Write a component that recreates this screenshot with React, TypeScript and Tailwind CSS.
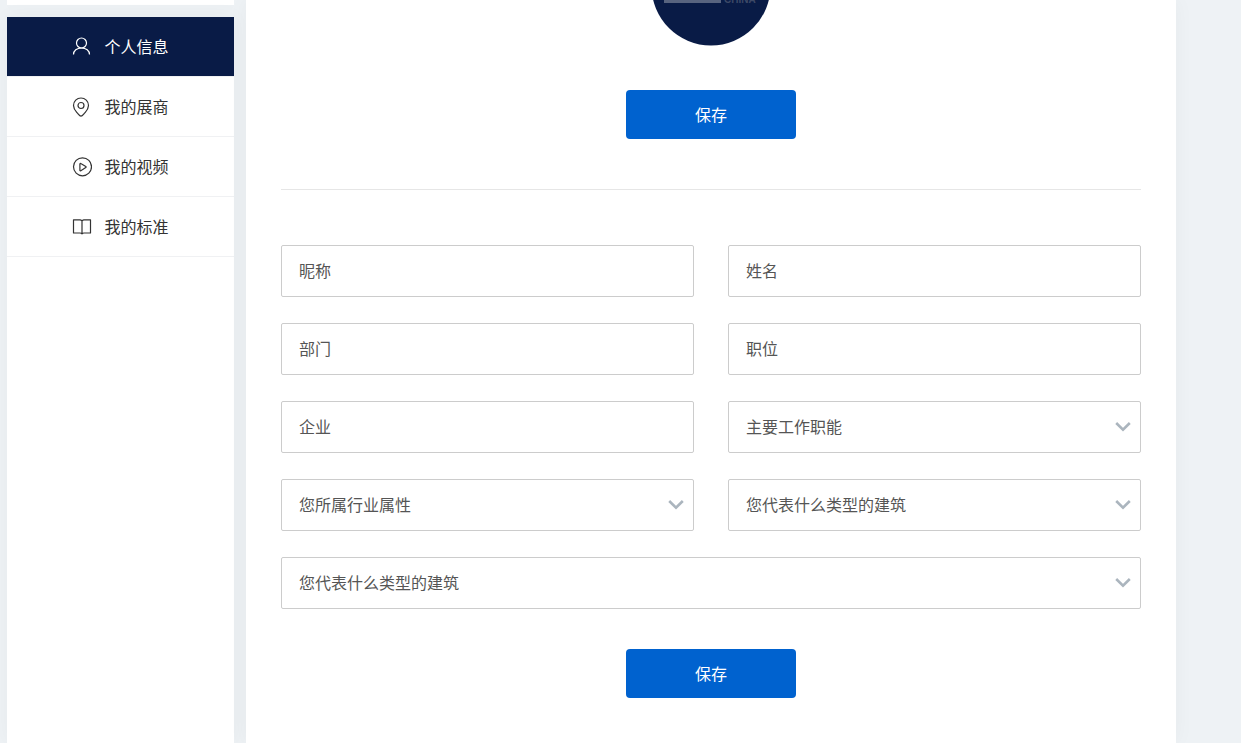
import type { ReactNode } from 'react';

type NavItem = { label: string; icon: ReactNode; active?: boolean };

const navItems: NavItem[] = [
  {
    label: '个人信息',
    active: true,
    icon: (
      <>
        <circle cx="9.5" cy="6" r="5" />
        <path d="M1.5 17.500c0-3.800 3.400-6.500 8-6.500s8 2.700 8 6.500" />
      </>
    ),
  },
  {
    label: '我的展商',
    icon: (
      <>
        <path d="M9 19.200C7.600 19.200 7 18 5.500 16.200 3.500 13.800 1.500 12 1.500 8.500a7.500 7.500 0 0 1 15 0c0 3.500-2 5.300-4 7.700-1.500 1.800-2.100 3-3.500 3Z" />
        <circle cx="9" cy="8.500" r="3" />
      </>
    ),
  },
  {
    label: '我的视频',
    icon: (
      <>
        <circle cx="10.500" cy="9.800" r="9" />
        <path d="M7.900 7v6.200c0 .5.500.8.900.5l5-3.100c.5-.3.500-.8 0-1.100l-5-3c-.4-.3-.9 0-.9.500Z" />
      </>
    ),
  },
  {
    label: '我的标准',
    icon: (
      <path d="M10 4C9.500 3.300 9 2.800 8 2.800H1.500v13.200H8c1 0 1.500.300 2 .8.500-.5 1-.8 2-.8h6.500V2.800H12c-1 0-1.500.500-2 1.200Zm0 0v12.800" />
    ),
  },
];

type FieldDef = { id: string; label: string; kind: 'text' | 'select'; wide?: boolean };

const fields: FieldDef[] = [
  { id: 'nickname', label: '昵称', kind: 'text' },
  { id: 'fullname', label: '姓名', kind: 'text' },
  { id: 'department', label: '部门', kind: 'text' },
  { id: 'position', label: '职位', kind: 'text' },
  { id: 'company', label: '企业', kind: 'text' },
  { id: 'jobFunction', label: '主要工作职能', kind: 'select' },
  { id: 'industry', label: '您所属行业属性', kind: 'select' },
  { id: 'buildingType', label: '您代表什么类型的建筑', kind: 'select' },
  { id: 'buildingTypeOther', label: '您代表什么类型的建筑', kind: 'select', wide: true },
];

const controlClass =
  'block h-[52px] w-full appearance-none rounded-xs border border-[#ccc] bg-white px-[17px] pt-0.5 text-base text-[#555] outline-none placeholder:text-[#555] placeholder:opacity-100 focus:border-[#0062cf]';

function Field({ id, label, kind, wide }: FieldDef) {
  return (
    <div className={wide ? 'relative col-span-2' : 'relative'}>
      {kind === 'text' ? (
        <input id={id} type="text" aria-label={label} placeholder={label} className={controlClass} />
      ) : (
        <>
          <select id={id} aria-label={label} defaultValue="" className={controlClass}>
            <option value="">{label}</option>
          </select>
          <svg
            className="pointer-events-none absolute top-5 right-2.5 h-3 w-4"
            viewBox="0 0 16 12"
            fill="none"
            stroke="#abb5be"
            strokeWidth="2.6"
            aria-hidden="true"
          >
            <path d="M1.200 2 8 8.600 14.800 2" />
          </svg>
        </>
      )}
    </div>
  );
}

function SaveButton() {
  return (
    <button
      type="button"
      className="mx-auto block h-[49px] w-[170px] rounded bg-[#0062cf] pt-0.5 text-base text-white hover:bg-[#0057b8]"
    >
      保存
    </button>
  );
}

function Avatar() {
  return (
    <svg className="mx-auto block h-[46px] w-[120px]" viewBox="0 0 120 46" role="img" aria-label="CHINA">
      <circle cx="60" cy="-14" r="59.5" fill="#091b46" />
      <rect x="13" y="-2" width="57" height="5" fill="#58647f" />
      <text x="73" y="3" fontSize="10" fontWeight="700" fill="#3d4966">
        CHINA
      </text>
    </svg>
  );
}

export default function App() {
  return (
    <div className="flex min-h-screen gap-3 bg-[#eef2f5] pr-[65px] pl-[7px] font-['Liberation_Sans','Noto_Sans_CJK_SC',sans-serif] font-normal">
      <aside className="flex w-[227px] shrink-0 flex-col gap-3">
        <div className="h-[5px] bg-white shadow-[0_0_20px_rgba(0,0,0,0.04)]" />
        <nav className="flex-1 bg-white shadow-[0_0_20px_rgba(0,0,0,0.04)]">
          <ul>
            {navItems.map((item) => (
              <li key={item.label} className="border-b border-[#f0f1f3]">
                <a
                  href="#"
                  aria-current={item.active ? 'page' : undefined}
                  className={
                    item.active
                      ? 'flex h-[59px] items-center justify-center gap-3 bg-[#091b46] text-base text-white'
                      : 'flex h-[59px] items-center justify-center gap-3 bg-white text-base text-[#333]'
                  }
                >
                  <svg
                    className="h-5 w-5"
                    viewBox="0 0 20 20"
                    fill="none"
                    stroke="currentColor"
                    strokeWidth="1.2"
                    strokeLinejoin="round"
                    aria-hidden="true"
                  >
                    {item.icon}
                  </svg>
                  <span className="pt-0.5">{item.label}</span>
                </a>
              </li>
            ))}
          </ul>
        </nav>
      </aside>

      <main className="min-w-0 flex-1 bg-white px-[35px] pb-[45px] shadow-[0_0_20px_rgba(0,0,0,0.04)]">
        <section className="border-b border-[#e6e6e6] pb-[50px]">
          <Avatar />
          <div className="pt-11">
            <SaveButton />
          </div>
        </section>
        <form className="pt-[55px]">
          <div className="grid grid-cols-2 gap-x-[34px] gap-y-[26px]">
            {fields.map((field) => (
              <Field key={field.id} {...field} />
            ))}
          </div>
          <div className="pt-10">
            <SaveButton />
          </div>
        </form>
      </main>
    </div>
  );
}
